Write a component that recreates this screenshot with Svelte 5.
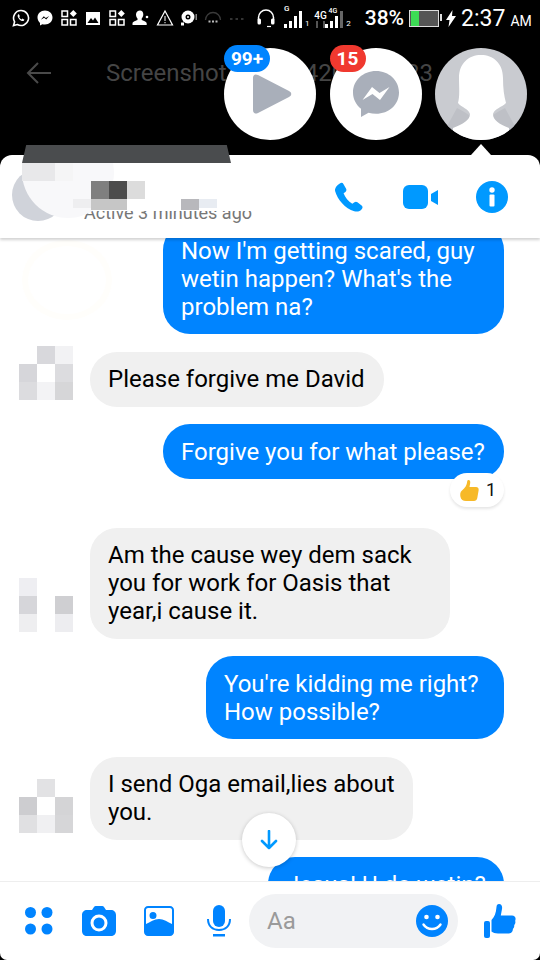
<script>
    // blurred avatars, three rows of 18px blocks ("" = nothing there)
    const avatars = {
        a: ["", "#d8d8dc", "#f2f2f4", "#d6d6da", "#ffffff", "#dcdcdf", "#dcdcdf", "#f3f3f5", "#d6d6d8"],
        b: ["#eeeef2", "", "", "#d6d6da", "", "#cfcfd2", "#eeeef0", "", "#ededf0"],
        c: ["", "#e2e2e4", "", "#cdcdd0", "#ffffff", "#d4d4d6", "#e0e0e2", "#f0f0f2", "#d6d6d8"],
    };

    const messages = [
        { out: true, lines: ["Now I'm getting scared, guy", "wetin happen? What's the", "problem na?"], width: 341 },
        { lines: ["Please forgive me David"], width: 294, avatar: "a" },
        { out: true, lines: ["Forgive you for what please?"], width: 341, reaction: 1 },
        { lines: ["Am the cause wey dem sack", "you for work for Oasis that", "year,i cause it."], width: 360, avatar: "b" },
        { out: true, lines: ["You're kidding me right?", "How possible?"], width: 298 },
        { lines: ["I send Oga email,lies about", "you."], width: 323, avatar: "c" },
        { out: true, lines: ["Jesus! U do wetin?"], width: 236 },
    ];

    const headerBlocks = [
        { x: 22, y: 8, w: 33, h: 18, c: "#e8e8ea" },
        { x: 55, y: 8, w: 18, h: 18, c: "#f5f5f6" },
        { x: 91, y: 26, w: 18, h: 18, c: "#7f7f7f" },
        { x: 109, y: 26, w: 18, h: 18, c: "#4c4c4c" },
        { x: 127, y: 26, w: 18, h: 18, c: "#dcdcdc" },
        { x: 73, y: 44, w: 18, h: 9, c: "#eeeef0" },
        { x: 91, y: 44, w: 36, h: 11, c: "#c6c6c6" },
        { x: 181, y: 44, w: 18, h: 11, c: "#b8b8bc" },
        { x: 199, y: 44, w: 18, h: 9, c: "#e8ecf2" },
    ];
</script>

<div class="screen">
    <div class="status">
        <svg class="s" viewBox="0 0 18 18"><path d="M9 1.500a7.500 7.500 0 0 0-6.400 11.300L1.500 16.500l3.800-1A7.500 7.500 0 1 0 9 1.500z" fill="none" stroke="#fff" stroke-width="1.600"/><path d="M6.300 5.200c-1.200 1-.8 2.900.8 4.700s3.500 2.800 4.700 1.800l.6-1-2-1.100-.8.800c-1-.4-2-1.400-2.400-2.400l.7-.8-1-2z" fill="#fff"/></svg>
        <svg class="s" viewBox="0 0 18 18"><path d="M9 1.500c-4.300 0-7.500 3-7.500 7 0 2.200 1 4.100 2.500 5.400v2.600l2.400-1.300c.8.200 1.700.300 2.600.300 4.300 0 7.500-3 7.500-7s-3.200-7-7.500-7z" fill="#fff"/><path d="M4.800 10.800l3-3.600 2 1.800 3.400-2-3 3.600-2-1.800z" fill="#000"/></svg>
        <svg class="s" viewBox="0 0 18 18"><path d="M2 2h5.500v5.500H2zM2 10.500h5.500V16H2zM10.500 10.500H16V16h-5.500z" fill="none" stroke="#fff" stroke-width="1.500"/><path d="M13.300 1l3.500 3.500-3.500 3.500-3.500-3.500z" fill="#fff"/></svg>
        <svg class="s" viewBox="0 0 18 18"><path d="M2 3h14v13H2z" fill="#fff"/><path d="M3.500 14l3.500-5 2 2.500 2-3 3.500 5.500z" fill="#000"/></svg>
        <svg class="s" viewBox="0 0 18 18"><path d="M2 2h5.500v5.500H2zM2 10.500h5.500V16H2zM10.500 10.500H16V16h-5.500z" fill="none" stroke="#fff" stroke-width="1.500"/><path d="M13.300 1l3.500 3.500-3.500 3.500-3.500-3.500z" fill="#fff"/></svg>
        <svg class="s" viewBox="0 0 18 18"><path d="M8 1.500c2 0 3.300 1.500 3.300 3.800 0 2-.8 3.500-1.600 4.200v1.500c1.500.8 5 1.400 5 3.500V16H.5v-1.500c0-2.100 3.500-2.700 5-3.500V9.500C4.700 8.800 4 7.300 4 5.300c0-2.300 2-3.800 4-3.800z" fill="#fff"/><circle cx="15" cy="8" r="1.300" fill="#fff"/></svg>
        <svg class="s" viewBox="0 0 18 18"><path d="M9 2L1.500 16h15z" fill="none" stroke="#fff" stroke-width="1.200"/><path d="M8.500 7h1v5h-1zM8.500 13h1v1.300h-1z" fill="#fff"/></svg>
        <svg class="s" viewBox="0 0 18 18"><circle cx="8" cy="8" r="6.500" fill="#fff"/><circle cx="8" cy="8" r="2.500" fill="#000"/><circle cx="8" cy="8" r="1" fill="#fff"/><rect x="1" y="13.500" width="3" height="3" fill="#fff"/><rect x="15.500" y="5" width="1.500" height="6" fill="#888"/></svg>
        <svg class="s" viewBox="0 0 18 18"><path d="M1.500 11a7.500 7.500 0 0 1 15 0" fill="none" stroke="#3a3a3a" stroke-width="1.300"/><path d="M4.500 12.500h2M8 12.500h2M11.500 12.500h2" stroke="#bbb" stroke-width="1.800"/></svg>
        <svg class="s" viewBox="0 0 18 18"><path d="M2 10h2.500M7.500 10h2.500M13 10h2.500" stroke="#333" stroke-width="2"/></svg>
        <svg class="s head" viewBox="0 0 20 20"><path d="M2.500 12V9.500a7.500 7.500 0 0 1 15 0V12" fill="none" stroke="#fff" stroke-width="1.500"/><rect x="1.500" y="10.500" width="3.500" height="6" rx="1.500" fill="#fff"/><rect x="15" y="10.500" width="3.500" height="6" rx="1.500" fill="#fff"/><path d="M15 18.500h-4" stroke="#fff" stroke-width="1.200"/></svg>
        <div class="sim">
            <small class="net">G</small>
            <svg width="18" height="17" viewBox="0 0 18 17"><path d="M0 13h3v4H0zM5 10h3v7H5zM10 5h3v12h-3zM15 0h3v17h-3z" fill="#fff"/></svg>
            <small class="slot">1</small>
        </div>
        <div class="sim second">
            <span class="net-stack">
                <small class="net wide">4G</small>
                <svg width="14" height="7" viewBox="0 0 14 7"><path d="M3 0v7M10 0v7" stroke="#555" stroke-width="2"/></svg>
            </span>
            <small class="net tiny">4G</small>
            <svg width="18" height="17" viewBox="0 0 18 17"><path d="M0 13h3v4H0zM5 10h3v7H5zM10 5h3v12h-3z" fill="#fff"/><path d="M15 0h3v17h-3z" fill="#666"/></svg>
            <small class="slot">2</small>
        </div>
        <span class="pct">38%</span>
        <div class="battery"><i></i></div>
        <svg class="bolt" width="10" height="17" viewBox="0 0 10 17"><path d="M6.500 0L0 10h3.500L2.500 17 10 6H6z" fill="#fff"/></svg>
        <span class="clock">2:37</span>
        <span class="ampm">AM</span>
    </div>

    <div class="title-bar">
        <svg width="26" height="24" viewBox="0 0 26 24"><path d="M25 12H2M12 2L2 12l10 10" fill="none" stroke="#4a4a4a" stroke-width="2"/></svg>
        <span class="title">Screenshot_20190420-023723</span>
    </div>

    <div class="card">
        <span class="active">Active 3 minutes ago</span>
        <div class="blur">
            <div class="blur-arc"></div>
            <div class="blur-strip"></div>
            <div class="blur-circle"></div>
            {#each headerBlocks as b}
                <div class="blur-block" style="left:{b.x}px;top:{b.y}px;width:{b.w}px;height:{b.h}px;background:{b.c}"></div>
            {/each}
        </div>
        <div class="actions">
            <svg width="31" height="31" viewBox="0 0 32 32"><path d="M6 1.500c1.500-1 3-.8 3.700.5l2.800 5c.6 1.200.3 2.400-.7 3.200l-1.900 1.500c1.500 4.300 5 8.500 9 10.700l2.200-1.600c1-.7 2.200-.7 3.100.1l4.300 3.300c1.200 1 1.300 2.400.3 3.600-2 2.500-4.800 3.400-7.900 2.300C11.500 27.500 3.500 18 1.200 9.500.5 6.300 3 3.300 6 1.500z" fill="#0099ff"/></svg>
            <svg width="35" height="24" viewBox="0 0 35 24"><rect width="25" height="24" rx="6" fill="#0099ff"/><path d="M28 9l7-4v15l-7-4z" fill="#0099ff"/></svg>
            <svg width="32" height="32" viewBox="0 0 32 32"><circle cx="16" cy="16" r="16" fill="#0099ff"/><circle cx="16" cy="9" r="2.700" fill="#fff"/><rect x="13.500" y="13.500" width="5" height="12" rx="1" fill="#fff"/></svg>
        </div>
    </div>

    <div class="chat">
        <div class="ghost"></div>
        <div class="list">
            {#each messages as m}
                <div class="row" class:out={m.out} class:has-reaction={m.reaction}>
                    {#if m.avatar}
                        <div class="pixels">
                            {#each avatars[m.avatar] as c}
                                <span style="background:{c || 'transparent'}"></span>
                            {/each}
                        </div>
                    {/if}
                    <div class="bubble" style="width:{m.width}px">
                        {#each m.lines as line}
                            <div>{line}</div>
                        {/each}
                    </div>
                    {#if m.reaction}
                        <div class="reaction">
                            <svg width="19" height="21" viewBox="0 0 19 21"><path d="M8.500 0c1.500 0 2 1.500 1.700 3L9.500 7H16c2 0 3 1.500 2.600 3.500l-1.300 7.500c-.3 2-1.700 3-3.300 3H6c-3 0-5-1.500-5.500-4C0 14.500 0 12 2 10.500 5 8 7 5 7.200 1.500 7.300.5 7.800 0 8.500 0z" fill="#f7b928"/></svg>
                            <span>{m.reaction}</span>
                        </div>
                    {/if}
                </div>
            {/each}
        </div>
        <button class="down" type="button" aria-label="Scroll to bottom">
            <svg width="20" height="20" viewBox="0 0 20 20"><path d="M10 1v17M3 11l7 7 7-7" fill="none" stroke="#0099ff" stroke-width="2.600" stroke-linecap="round" stroke-linejoin="round"/></svg>
        </button>
    </div>

    <div class="composer">
        <svg class="tool" width="28" height="28" viewBox="0 0 28 28"><circle cx="5.500" cy="5.500" r="5.500"/><circle cx="22" cy="5.500" r="5.500"/><circle cx="5.500" cy="22" r="5.500"/><circle cx="22" cy="22" r="5.500"/></svg>
        <svg class="tool" width="34" height="30" viewBox="0 0 34 30"><path fill-rule="evenodd" d="M5 4h5l2-3c.4-.6 1-1 1.800-1h6.400c.8 0 1.400.4 1.800 1l2 3h5c2.800 0 5 2 5 5v16c0 3-2.200 5-5 5H5c-2.800 0-5-2-5-5V9c0-3 2.200-5 5-5zm12 4.500a8.500 8.500 0 1 0 0 17 8.500 8.500 0 0 0 0-17zm0 3a5.500 5.500 0 1 1 0 11 5.500 5.500 0 0 1 0-11z"/></svg>
        <svg class="tool" width="30" height="30" viewBox="0 0 30 30"><path fill-rule="evenodd" d="M4 0h22c2.200 0 4 1.800 4 4v22c0 2.200-1.800 4-4 4H4c-2.200 0-4-1.800-4-4V4c0-2.200 1.800-4 4-4zm0 2c-1.100 0-2 .9-2 2v14c4-2 8.500-5 13-5s9 3 13 5V4c0-1.100-.9-2-2-2zm5 4a3.500 3.500 0 1 1 0 7 3.500 3.500 0 0 1 0-7z"/></svg>
        <svg class="tool" width="24" height="32" viewBox="0 0 24 32"><rect x="6" y="0" width="12" height="22" rx="6"/><path d="M1 14c0 7 4.500 11 11 11s11-4 11-11" fill="none" stroke="#0084ff" stroke-width="2"/><rect x="6" y="29" width="12" height="2.500"/></svg>
        <div class="input">
            <span>Aa</span>
            <svg class="tool" width="32" height="32" viewBox="0 0 32 32"><circle cx="16" cy="16" r="16"/><circle cx="10.500" cy="12" r="2.300" fill="#fff"/><circle cx="21.500" cy="12" r="2.300" fill="#fff"/><path d="M7.500 19.500c2 3 5 4.500 8.500 4.500s6.500-1.500 8.500-4.500" fill="none" stroke="#fff" stroke-width="2.400" stroke-linecap="round"/></svg>
        </div>
        <svg class="tool like" width="32" height="35" viewBox="0 0 32 35"><rect x="0" y="17" width="6" height="17" rx="2"/><path d="M15 0c2.500 0 3.500 2.500 3 5l-1.200 6.500H28c2.500 0 4 2 3.500 4l-.3 1.500c.5 1.500 0 3-1 4 .2 1.500-.2 3-1.300 3.800.1 2.200-1 4.700-3.900 4.700H14c-3 0-5-1-6.500-2V16c3-3 4.500-7 5-13 .1-1.800 1-3 2.500-3z"/></svg>
    </div>

    <div class="heads">
        <div class="chat-head">
            <svg class="play" width="40" height="40" viewBox="0 0 40 40"><path d="M1 4c0-3 2-4.500 5-3l31 16c3 1.500 3 4.500 0 6L6 39c-3 1.500-5 0-5-3z" fill="#a9afba"/></svg>
            <span class="badge blue">99+</span>
        </div>
        <div class="chat-head">
            <svg width="46" height="46" viewBox="0 0 46 46"><path d="M23 0C10 0 0 9.500 0 21.500c0 6.500 3 12.300 8 16.200V46l7.500-4.200c2.400.7 4.900 1 7.500 1 13 0 23-9.300 23-21.300S36 0 23 0z" fill="#a9afba"/><path d="M9.500 29l9.500-13 7.500 6 10-6-9.500 13-7.500-6z" fill="#fff"/></svg>
            <span class="badge red">15</span>
        </div>
        <div class="chat-head person">
            <svg width="92" height="92" viewBox="0 0 92 92"><path d="M22 60c5 3 10 5 13 8l-6 14H10zM70 60c-5 3-10 5-13 8l6 14h19z" fill="#bec0c6"/><path d="M46 7C58 7 68 15 68 30c0 10 1 18 3 25-5 5-11 5-13 11 0 6 6 10 16 14v12H18V80c10-4 17-8 17-14-2-6-8-6-12-11 2-7 1-15 1-25C24 15 34 7 46 7z" fill="#fff"/></svg>
        </div>
        <div class="notch"></div>
    </div>
    <div class="dark-bar"></div>
</div>

<style>
    :global(body) {
        background: #000;
    }

    .screen {
        position: relative;
        width: 540px;
        height: 960px;
        display: flex;
        flex-direction: column;
        overflow: hidden;
        background: #000;
        border-radius: 0 0 7px 7px;
        font-family: Roboto, "Liberation Sans", sans-serif;
    }

    /* status bar */
    .status {
        height: 36px;
        flex-shrink: 0;
        display: flex;
        align-items: center;
        padding-left: 12px;
        color: #fff;
    }

    .s {
        width: 18px;
        height: 18px;
        margin-right: 6px;
        flex-shrink: 0;
    }

    .head {
        width: 20px;
        height: 20px;
        margin-left: 4px;
        margin-right: 8px;
    }

    .sim {
        display: flex;
        align-items: flex-end;
        position: relative;
        height: 20px;
    }

    .sim small {
        font-size: 8px;
        line-height: 1;
    }

    .net {
        font-weight: 500;
    }

    .sim > .net:first-child {
        position: absolute;
        left: 0;
        top: -3px;
    }

    .slot {
        margin-left: 3px;
    }

    .second {
        margin-left: 4px;
    }

    .net-stack {
        display: flex;
        flex-direction: column;
        align-items: center;
        margin-right: 1px;
    }

    .net.wide {
        font-size: 10px;
    }

    .net.tiny {
        font-size: 7px;
        align-self: flex-start;
        margin-right: -12px;
    }

    .pct {
        font-size: 21px;
        margin-left: 14px;
        font-weight: 500;
    }

    .battery {
        width: 28px;
        height: 15px;
        margin-left: 5px;
        border: 1px solid #ddd;
        background: #555;
        position: relative;
        flex-shrink: 0;
    }

    .battery::after {
        content: "";
        position: absolute;
        right: -4px;
        top: 3px;
        width: 2px;
        height: 7px;
        background: #ddd;
    }

    .battery i {
        display: block;
        width: 8px;
        height: 100%;
        margin-left: 1px;
        background: #3ddc55;
    }

    .bolt {
        margin-left: 7px;
    }

    .clock {
        font-size: 23px;
        margin-left: 5px;
    }

    .ampm {
        font-size: 14px;
        margin-left: 5px;
        margin-top: 5px;
    }

    /* dimmed app bar behind the heads */
    .title-bar {
        height: 119px;
        flex-shrink: 0;
        display: flex;
        align-items: flex-start;
        padding: 25px 0 0 26px;
        box-sizing: border-box;
        gap: 54px;
        white-space: nowrap;
    }

    .title {
        font-size: 24px;
        line-height: 24px;
        color: #454545;
    }

    .heads {
        position: absolute;
        top: 48px;
        left: 224px;
        display: flex;
        gap: 13.5px;
        z-index: 5;
    }

    .chat-head {
        position: relative;
        width: 92px;
        height: 92px;
        border-radius: 50%;
        background: #fff;
        display: flex;
        align-items: center;
        justify-content: center;
    }

    .chat-head.person {
        background: #c9cbd0;
        overflow: hidden;
    }

    .chat-head svg {
        flex-shrink: 0;
    }

    .play {
        margin-left: 3px;
    }

    .badge {
        position: absolute;
        top: -3px;
        left: 0;
        height: 27px;
        border-radius: 14px;
        color: #fff;
        font-size: 19px;
        font-weight: 700;
        line-height: 27px;
        text-align: center;
    }

    .badge.blue {
        width: 46px;
        background: #0084ff;
    }

    .badge.red {
        width: 36px;
        background: #f0392f;
    }

    .notch {
        position: absolute;
        left: 247px;
        top: 96px;
        width: 0;
        height: 0;
        border-left: 10px solid transparent;
        border-right: 10px solid transparent;
        border-bottom: 11px solid #fff;
    }

    .dark-bar {
        position: absolute;
        left: 22px;
        top: 145px;
        width: 209px;
        height: 18px;
        background: #4a4c4e;
        clip-path: polygon(2% 0, 98% 0, 100% 100%, 0 100%);
        z-index: 4;
    }

    /* conversation header */
    .card {
        position: relative;
        z-index: 3;
        height: 83px;
        flex-shrink: 0;
        background: #fff;
        border-radius: 12px 12px 0 0;
        box-shadow: 0 2px 3px rgba(0, 0, 0, 0.18);
    }

    .active {
        position: absolute;
        left: 84px;
        top: 47px;
        font-size: 18px;
        line-height: 22px;
        color: #777;
    }

    .blur {
        position: absolute;
        inset: 0;
        overflow: hidden;
        border-radius: 12px 12px 0 0;
        pointer-events: none;
    }

    .blur-arc {
        position: absolute;
        left: 12px;
        top: 14px;
        width: 52px;
        height: 52px;
        border-radius: 50%;
        background: #d0d3da;
    }

    .blur-circle {
        position: absolute;
        left: 22px;
        top: -29px;
        width: 92px;
        height: 92px;
        border-radius: 50%;
        background: #f8f8fa;
    }

    .blur-strip {
        position: absolute;
        left: 70px;
        top: 8px;
        width: 190px;
        height: 48px;
        background: #fff;
    }

    .blur-block {
        position: absolute;
    }

    .actions {
        position: absolute;
        right: 32px;
        top: 26px;
        display: flex;
        align-items: center;
        gap: 38px;
    }

    /* messages */
    .chat {
        position: relative;
        flex: 1;
        min-height: 0;
        background: #fff;
        overflow: hidden;
    }

    .ghost {
        position: absolute;
        left: 22px;
        top: 2px;
        width: 90px;
        height: 80px;
        box-sizing: border-box;
        border: 6px solid #fffefb;
        border-radius: 50%;
    }

    .list {
        position: relative;
        display: flex;
        flex-direction: column;
        gap: 17.5px;
        margin-top: -15px;
        font-size: 24px;
        line-height: 28px;
    }

    .row {
        position: relative;
        display: flex;
        align-items: flex-end;
        padding-left: 19px;
    }

    .row.out {
        justify-content: flex-end;
        padding-right: 36px;
    }

    .row.has-reaction {
        margin-bottom: 31px;
    }

    .pixels {
        display: grid;
        grid-template-columns: repeat(3, 18px);
        grid-auto-rows: 18px;
        margin: -20px 17px 7px 0;
        flex-shrink: 0;
    }

    .bubble {
        box-sizing: border-box;
        padding: 13.5px 18px;
        border-radius: 27px;
        background: #f0f0f0;
        color: #000;
        white-space: nowrap;
    }

    .out .bubble {
        background: #0084ff;
        color: #fff;
    }

    .reaction {
        position: absolute;
        right: 36px;
        top: 49px;
        width: 54px;
        height: 34px;
        box-sizing: border-box;
        display: flex;
        align-items: center;
        gap: 7px;
        padding-left: 10px;
        background: #fff;
        border-radius: 17px;
        box-shadow: 0 2px 3px rgba(0, 0, 0, 0.1);
        font-size: 18px;
        color: #111;
    }

    .down {
        position: absolute;
        left: 242px;
        top: 575px;
        width: 54px;
        height: 54px;
        padding: 0;
        border: none;
        border-radius: 50%;
        background: #fff;
        box-shadow: 0 1px 4px rgba(0, 0, 0, 0.22);
        display: flex;
        align-items: center;
        justify-content: center;
    }

    /* composer */
    .composer {
        height: 79px;
        flex-shrink: 0;
        box-sizing: border-box;
        display: flex;
        align-items: center;
        padding-left: 25px;
        background: #fff;
        border-top: 1px solid #eeeeee;
        z-index: 2;
    }

    .tool {
        fill: #0084ff;
        flex-shrink: 0;
    }

    .composer > .tool:nth-child(1) {
        margin-right: 29px;
    }

    .composer > .tool:nth-child(2) {
        margin-right: 28px;
    }

    .composer > .tool:nth-child(3) {
        margin-right: 33px;
    }

    .input {
        width: 209px;
        height: 54px;
        margin-left: 18px;
        box-sizing: border-box;
        display: flex;
        align-items: center;
        justify-content: space-between;
        padding: 0 10px 0 18px;
        border-radius: 27px;
        background: #f1f2f4;
        color: #9a9a9a;
        font-size: 24px;
    }

    .like {
        margin-left: 26px;
    }
</style>
